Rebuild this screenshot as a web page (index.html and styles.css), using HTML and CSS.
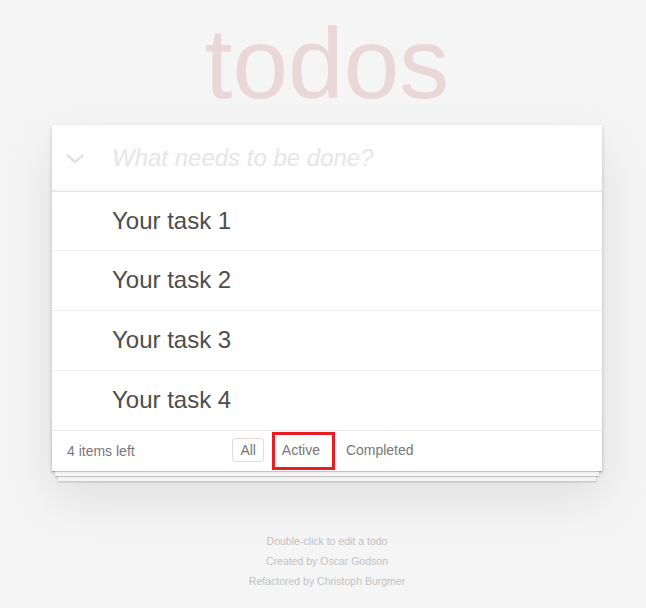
FILE: index.html
```html
<!DOCTYPE html>
<html lang="en">
<head>
<meta charset="utf-8">
<title>Todos</title>
<link rel="stylesheet" href="styles.css">
</head>
<body>
<div class="page">
  <h1 class="title">todos</h1>
  <section class="todoapp">
    <header class="entry">
      <div class="toggle-all">
        <svg width="18" height="10" viewBox="0 0 18 10" aria-hidden="true">
          <polyline points="1.5,1.5 9,8 16.5,1.5" fill="none" stroke="#e2e2e2" stroke-width="2.4" stroke-linecap="round" stroke-linejoin="round"/>
        </svg>
      </div>
      <input class="new-todo" placeholder="What needs to be done?">
    </header>
    <ul class="todo-list">
      <li class="todo"><label>Your task 1</label></li>
      <li class="todo"><label>Your task 2</label></li>
      <li class="todo"><label>Your task 3</label></li>
      <li class="todo"><label>Your task 4</label></li>
    </ul>
    <footer class="footer">
      <span class="todo-count">4 items left</span>
      <ul class="filters">
        <li><a href="#/" class="filter selected">All</a></li>
        <li><a href="#/active" class="filter highlighted">Active</a></li>
        <li><a href="#/completed" class="filter">Completed</a></li>
      </ul>
      <span class="spacer"></span>
    </footer>
  </section>
  <footer class="info">
    <p>Double-click to edit a todo</p>
    <p>Created by Oscar Godson</p>
    <p>Refactored by Christoph Burgmer</p>
  </footer>
</div>
</body>
</html>
```

FILE: styles.css
```css
html, body {
  margin: 0;
  padding: 0;
}

body {
  background: #f5f5f5;
  color: #4d4d4d;
  font: 14px "Liberation Sans", Arial, sans-serif;
  line-height: 1.4em;
}

.page {
  width: 550px;
  margin: 0 auto;
  padding: 13px 0 0 8px;
}

.title {
  margin: 0 0 12px;
  font-size: 100px;
  line-height: 100px;
  height: 100px;
  font-weight: 100;
  text-align: center;
  color: rgba(175, 47, 47, 0.15);
}

.todoapp {
  background: #fff;
  margin: 0 0 40px;
  position: relative;
  box-shadow: 0 2px 4px 0 rgba(0, 0, 0, 0.2), 0 25px 50px 0 rgba(0, 0, 0, 0.1);
}

.entry {
  display: flex;
  align-items: center;
  background: rgba(0, 0, 0, 0.003);
  box-shadow: inset 0 -2px 1px rgba(0, 0, 0, 0.03);
  border-bottom: 1px solid #e6e6e6;
}

.toggle-all {
  width: 46px;
  padding-left: 14px;
  display: flex;
  align-items: center;
  margin-top: 3px;
}

.toggle-all svg {
  display: block;
}

.new-todo {
  flex: 1;
  min-width: 0;
  margin: 0;
  border: none;
  outline: none;
  background: transparent;
  font-family: "Liberation Sans", Arial, sans-serif;
  font-size: 24px;
  line-height: 1.4em;
  height: 65.6px;
  box-sizing: border-box;
  padding: 16px 16px 16px 0;
  color: #4d4d4d;
}

.new-todo::placeholder {
  font-style: italic;
  color: #e6e6e6;
}

.todo-list {
  margin: 0;
  padding: 0;
  list-style: none;
}

.todo {
  font-size: 24px;
  border-bottom: 1px solid #ededed;
}

.todo:last-child {
  border-bottom: none;
}

.todo label {
  display: block;
  margin-left: 45px;
  padding: 15px 60px 15px 15px;
  line-height: 1.2;
  color: #4d4d4d;
}

.footer {
  position: relative;
  display: grid;
  grid-template-columns: 1fr auto 1fr;
  align-items: center;
  color: #777;
  padding: 10px 15px;
  height: 20px;
  border-top: 1px solid #e6e6e6;
}

.footer::before {
  content: "";
  position: absolute;
  right: 0;
  bottom: 0;
  left: 0;
  height: 50px;
  overflow: hidden;
  pointer-events: none;
  box-shadow: 0 1px 1px rgba(0, 0, 0, 0.2),
              0 8px 0 -3px #f6f6f6,
              0 9px 1px -3px rgba(0, 0, 0, 0.2),
              0 16px 0 -6px #f6f6f6,
              0 17px 2px -6px rgba(0, 0, 0, 0.2);
}

.todo-count {
  text-align: left;
  position: relative;
  top: 1px;
}

.filters {
  margin: 0;
  padding: 0;
  list-style: none;
  white-space: nowrap;
}

.filters li {
  display: inline;
}

.filter {
  color: inherit;
  margin: 3px;
  padding: 3px 7px;
  text-decoration: none;
  border: 1px solid transparent;
  border-radius: 3px;
}

.filter.selected {
  border-color: rgba(175, 47, 47, 0.2);
}

.filter.highlighted {
  position: relative;
}

.filter.highlighted::after {
  content: "";
  position: absolute;
  left: -3px;
  top: -7px;
  width: 63px;
  height: 38px;
  box-sizing: border-box;
  border: 3px solid #ec1c24;
}

.info {
  margin: 65px auto 0;
  color: #bfbfbf;
  font-size: 10.5px;
  text-shadow: 0 1px 0 rgba(255, 255, 255, 0.5);
  text-align: center;
}

.info p {
  line-height: 10px;
  margin: 10px 0;
}
```
